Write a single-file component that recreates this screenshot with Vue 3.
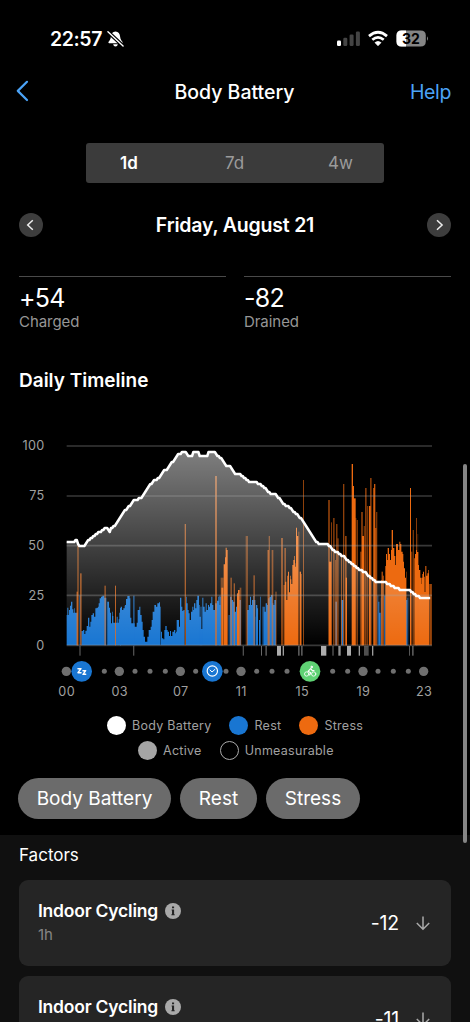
<script setup>
// Chart space: three units per CSS pixel, baseline at 646, 100% at 48.
const BASE = 646

// Step profiles: an x offset, then x/top pairs; the last x closes the run.
const restRuns = [
  [30, [170,555,172,533,175,555,177,540,180,527,183,515,187,538,190,548,193,535,195,548,203,646,214,603,219,600,223,612,226,602,230,588,234,563,238,590,241,575,244,555,248,550,252,560,256,535,260,533,264,530,266,520,269,505,273,500,277,497,283,503,289,646,292,515,297,533,300,548,303,580,306,545,308,558,310,578,315,578,320,560,323,578,326,568,328,548,332,530,336,540,340,535,344,527,348,507,352,500,356,498,358]],
  [360, [28,505,31,563,34,580,44,590,50,578,53,540,58,530,61,555,65,575,68,600,71,620,75,635,82,620,86,600,92,590,95,570,98,545,103,525,108,530,112,520,117,517,120,646,123,605,126,625,130,628,133,600,136,588,140,600,143,605,147,618,150,603,153,618,157,605,162,600,166,610,168,605,170,570,177,590,180,503,184,530,187,543,190,540,194,646,198,500,200,520,203,540,206,550,209,570,213,545,217,530,220,540,222,520,226,535,229,510,232,497,237,525,239,560,243,597,247,503,250,530,254,545,257,520,260,540,264,525,267,530,270,520,274,500,277,525,280,540,285,520,291,512,295,543,297]],
  [600, [51,515,55,500,58,525,61,500,64]],
  [600, [90,500,95,510,99,515,104,545,108,530,112,497,115,510,120,510,123]],
  [600, [141,540,146,525,150,500,153,525,156,510,160,498,163,510,166,646,168,525,172,535,174]],
  [600, [190,530,194,545,197,520,201,525,204,505,208,500,213,495,218,520,220,525,223,510,228]],
  [930, [205,515,208,548,212]],
]
const restThin = [
  [30,207,6,497,.45],[30,291,4,515,.35],[360,0,3,535,1],[360,39,5,497,.6],[360,120,3,530,.6],
  [360,239,8,530,.4],[360,297,5,497,.5],[600,85,5,555,.5],[600,166,3,560,.5],[600,177,3,570,1],
  [600,180,3,500,.6],[600,186,4,530,.4],[600,259,4,510,.7],[930,76,5,515,1],[930,94,6,510,1],
  [930,202,3,497,.6],[930,212,3,503,.5],[930,222,6,497,.7],[930,288,4,510,1],[930,292,3,503,.6],
]
const stressRuns = [
  [360, [311,403,315,382,317,353,320,360,323]],
  [600, [255,455,259,510,262,437,264,425,267,487,270,437,272,448,274,462,277,405,280,390,283,378,285,410,287,400,288,293,291,318,295]],
  [930, [227,408,228,372,231,390,233,354,237,372,240,390,243,360,245,300,249,354,253,378,256,405,258,342,261,342,264,360,268,335,271,342,274,365,278,372,280,395,282,415,285,443,288]],
  [930, [313,385,315,372,318,360,321,366,325,405,327,420,331,443,333,462,334,443,337,432,339,425,342,440,344,486,346,408,349,437,352,430,355,420,357]],
]
const stressThin = [
  [30,200,3,485,1],[30,202,4,345,.6],[30,210,5,430,.6],[30,283,5,467,.5],[30,315,3,467,.75],
  [360,194,4,282,.65],[360,285,6,138,.6],[360,302,9,443,.45],[360,304,6,473,1],[360,331,5,443,.5],
  [360,341,4,460,.6],[360,351,3,490,1],[600,114,5,480,1],[600,119,5,473,.5],[600,137,7,318,.45],
  [600,160,5,436,.5],[600,203,3,360,1],[600,206,4,318,.5],[600,215,5,360,.55],[600,226,4,485,.5],
  [600,243,6,324,.55],[600,251,3,465,.9],[600,253,5,354,.55],[600,295,3,305,.5],[600,299,4,425,1],
  [600,303,3,432,.5],[600,309,3,150,.6],
  [930,54,6,210,.5],[930,57,7,395,1],[930,63,3,277,.55],[930,69,5,264,.5],[930,75,3,390,.5],
  [930,79,3,282,.8],[930,82,4,325,.55],[930,93,3,375,.6],[930,99,4,162,.6],[930,105,5,318,.6],
  [930,107,4,443,1],[930,125,4,102,1],[930,129,3,168,1],[930,131,6,205,1],[930,136,3,264,.6],
  [930,140,4,270,.5],[930,151,4,365,.7],[930,153,6,246,.5],[930,156,6,318,1],[930,161,4,288,.45],
  [930,165,5,174,.55],[930,171,4,228,.5],[930,177,5,228,1],[930,180,5,144,.55],[930,190,3,174,1],
  [930,192,4,162,.85],[930,196,3,294,1],[930,198,4,246,.5],[930,213,3,450,.6],[930,215,3,425,1],
  [930,218,4,437,.6],[930,225,3,408,.5],[930,288,3,425,.4],[930,300,3,174,1],[930,303,4,365,.5],
  [930,308,4,300,.5],[930,318,3,264,.55],[930,321,4,312,.2],[930,357,4,462,.5],[930,361,4,462,.85],
]
const active = [
  [30,208,4,.45],[360,39,4,.45],[600,128,4,.45],[600,183,3,.6],[600,196,5,.45],[600,231,12,1],
  [600,248,4,.9],[600,294,5,.5],[600,303,5,.5],[600,363,16,1],[930,67,4,.5],[930,85,7,.85],
  [930,111,12,1],[930,146,4,.9],[930,162,14,.45],[930,186,4,.9],[930,297,3,.5],[930,306,5,.5],
]

const runPath = ([o, p]) => {
  let d = `M${o + p[0]} ${BASE}`
  for (let i = 0; i < p.length - 1; i += 2) d += `V${p[i + 1]}H${o + p[i + 2]}`
  return d + `V${BASE}Z`
}
const restPath = restRuns.map(runPath).join('') + 'M360 646V535H363V543H372V535H375V525H378V508H382V498H389V646Z'
const stressPath = stressRuns.map(runPath).join('')

const battery = [
  [200,336],[220,336],[224,330],[233,330],[235,342],[242,348],[252,348],[256,340],[270,325],[285,312],
  [300,304],[315,294],[324,292],[327,308],[332,294],[348,281],[356,265],[375,240],[402,210],[422,203],
  [445,170],[460,150],[475,144],[490,122],[500,118],[515,97],[532,74],[544,66],[560,66],[563,78],
  [577,78],[580,66],[595,66],[598,78],[622,78],[625,66],[647,66],[651,76],[660,80],[680,106],
  [690,108],[705,127],[720,131],[750,154],[770,156],[790,168],[810,188],[830,193],[850,220],[870,232],
  [905,265],[930,302],[950,335],[960,342],[984,342],[1000,358],[1030,377],[1070,412],[1095,425],
  [1130,455],[1158,455],[1175,466],[1205,479],[1230,480],[1250,495],[1270,503],[1292,503],
]
const levelAt = (x) => {
  const i = Math.max(1, battery.findIndex((p) => p[0] >= x))
  const [x0, y0] = battery[i - 1]
  const [x1, y1] = battery[i]
  const y = y0 + ((y1 - y0) * (x - x0)) / (x1 - x0)
  return BASE - Math.round((BASE - y) / 6) * 6 + 2
}
const samples = []
for (let x = 200; x <= 1292; x += 3.8) samples.push(`${x.toFixed(1)} ${levelAt(x)}`)
const linePath = 'M' + samples.join('L')
const areaPath = `${linePath}V${BASE}H200Z`

const grid = [[100, 48], [75, 198], [50, 347], [25, 496], [0, 646]]
const bigDots = [199, 358, 541, 723, 1089, 1271]
const hours = [[199, '00'], [358, '03'], [541, '07'], [723, '11'], [906, '15'], [1089, '19'], [1271, '23']]
const smallDots = [313, 405, 450, 496, 587, 678, 770, 816, 861, 998, 1043, 1134, 1180, 1225]
const factors = [{ name: 'Indoor Cycling', time: '1h', value: '-12' }, { name: 'Indoor Cycling', time: '1h', value: '-11' }]
</script>

<template>
  <main class="screen">
    <div class="status">
      <span class="time">22:57</span>
      <svg class="bell" width="17" height="18" viewBox="0 0 18 18">
        <path d="M9 1C6 1.200 4.200 3.300 4.100 6.500C4 9.500 2.200 10.800 1.500 12.200Q1.200 13.300 2.200 13.400H15.800Q16.800 13.300 16.500 12.200C15.800 10.800 14 9.500 13.900 6.500C13.800 3.300 12 1.200 9 1ZM6.500 14.500H11.500Q11 17 9 17T6.500 14.500Z" fill="#fff" />
        <path d="M1 1.400L17 16.400" stroke="#000" stroke-width="4" />
        <path d="M1 1.400L17 16.400" stroke="#fff" stroke-width="1.500" stroke-linecap="round" />
      </svg>
      <svg class="sys" width="94" height="20" viewBox="0 0 94 20">
        <rect x="0" y="11.500" width="4" height="5.500" rx="1.300" fill="#fff" />
        <rect x="6.300" y="8.700" width="4" height="8.300" rx="1.300" fill="#444" />
        <rect x="12.600" y="5.500" width="4" height="11.500" rx="1.300" fill="#444" />
        <rect x="18.900" y="2.500" width="4" height="14.500" rx="1.300" fill="#444" />
        <g fill="none" stroke="#fff" stroke-width="2.700">
          <path d="M32 7.100Q41 -.6 50 7.100" />
          <path d="M35.300 10.700Q41 6 46.700 10.700" />
        </g>
        <path d="M38 13.600Q41 11.300 44 13.600L41 16.700Z" fill="#fff" stroke="#fff" stroke-width=".8" stroke-linejoin="round" />
        <path d="M64.500 1.500H83.500Q88.800 1.500 88.800 6.500V12.500Q88.800 17.500 83.500 17.500H64.500Q59.500 17.500 59.500 12.500V6.500Q59.500 1.500 64.500 1.500Z" fill="#858585" />
        <path d="M69 1.500H64.500Q59.500 1.500 59.500 6.500V12.500Q59.500 17.500 64.500 17.500H69Z" fill="#fff" />
        <path d="M90 7.200Q92 9.500 90 11.800Z" fill="#858585" />
        <text x="74" y="14.500" text-anchor="middle" class="charge">32</text>
      </svg>
    </div>

    <header class="nav">
      <svg width="14" height="22" viewBox="0 0 14 22"><path d="M11 1.800L1.800 10.900L11 20" fill="none" stroke="#4ba3f7" stroke-width="2.200" stroke-linecap="round" stroke-linejoin="round" /></svg>
      <h1>Body Battery</h1>
      <a>Help</a>
    </header>

    <div class="tabs"><b>1d</b><span>7d</span><span>4w</span></div>

    <div class="date">
      <i class="round"><svg width="24" height="24" viewBox="0 0 24 24"><path d="M13.800 7.200L8.700 12L13.800 16.800" /></svg></i>
      <h2>Friday, August 21</h2>
      <i class="round"><svg width="24" height="24" viewBox="0 0 24 24"><path d="M10 7.200L15.100 12L10 16.800" /></svg></i>
    </div>

    <section class="stats">
      <div><strong>+54</strong><small>Charged</small></div>
      <div><strong>-82</strong><small>Drained</small></div>
    </section>

    <h3 class="heading">Daily Timeline</h3>

    <svg class="chart" width="470" height="280" viewBox="0 0 1410 840">
      <defs>
        <linearGradient id="fade" gradientUnits="userSpaceOnUse" x1="0" y1="60" x2="0" y2="646">
          <stop offset="0" stop-color="#fff" stop-opacity=".5" />
          <stop offset="1" stop-color="#fff" stop-opacity="0" />
        </linearGradient>
      </defs>
      <path :d="restPath" fill="#1976d2" />
      <rect v-for="(b, i) in restThin" :key="'r' + i" :x="b[0] + b[1]" :y="b[3]" :width="b[2]" :height="646 - b[3]" :opacity="b[4]" fill="#1976d2" />
      <path :d="stressPath" fill="#ed6a10" />
      <rect v-for="(b, i) in stressThin" :key="'s' + i" :x="b[0] + b[1]" :y="b[3]" :width="b[2]" :height="646 - b[3]" :opacity="b[4]" fill="#ed6a10" />
      <path :d="areaPath" fill="url(#fade)" />
      <g v-for="g in grid" :key="g[0]">
        <path :d="`M200 ${g[1]}H1296`" stroke="#aaa" stroke-opacity=".33" stroke-width="5" />
        <text x="134" :y="g[1] + 13" text-anchor="end" class="axis">{{ g[0] }}</text>
      </g>
      <path :d="linePath" fill="none" stroke="#fff" stroke-width="7.500" stroke-linejoin="round" />
      <rect v-for="(b, i) in active" :key="'a' + i" :x="b[0] + b[1]" y="648" :width="b[2]" height="29" :opacity="b[3]" fill="#adadad" />
      <circle v-for="x in smallDots" :key="x" :cx="x" cy="724" r="7.500" fill="#6f6f6f" />
      <circle v-for="x in bigDots" :key="x" :cx="x" cy="724" r="14" fill="#6f6f6f" />
      <text v-for="h in hours" :key="h[1]" :x="h[0] + 1" y="797" text-anchor="middle" class="axis">{{ h[1] }}</text>
      <g fill="none" stroke="#fff" stroke-linecap="round" stroke-linejoin="round">
        <circle cx="245" cy="724" r="31" fill="#1976d2" stroke="none" />
        <path d="M234 716H243L234 728H243M249 722H257L249 733H257" stroke-width="4.500" />
        <circle cx="637" cy="724" r="31" fill="#1976d2" stroke="none" />
        <circle cx="637" cy="723" r="15.500" stroke-width="3.500" />
        <path d="M630 720L636 726L645 718" stroke-width="3" />
        <circle cx="930" cy="724" r="31" fill="#5fd274" stroke="none" />
        <g stroke-width="2.500">
          <circle cx="920" cy="732" r="6.500" /><circle cx="941" cy="732" r="6.500" />
          <path d="M929 735L932 728L924 724L932 716L937 722H942" stroke-width="3.500" />
          <circle cx="935" cy="711" r="2.500" fill="#fff" />
        </g>
      </g>
    </svg>

    <div class="legend">
      <div class="row one">
        <span><i class="white"></i>Body Battery</span><span><i class="blue"></i>Rest</span><span><i class="orange"></i>Stress</span>
      </div>
      <div class="row two"><span><i class="gray"></i>Active</span><span><i class="hollow"></i>Unmeasurable</span></div>
    </div>

    <div class="chips"><button class="c1">Body Battery</button><button class="c2">Rest</button><button class="c3">Stress</button></div>

    <section class="factors">
      <h4>Factors</h4>
      <article v-for="f in factors" :key="f.value" class="card">
        <div class="info">
          <div class="name"><span>{{ f.name }}</span>
            <svg width="16" height="16" viewBox="0 0 16 16"><circle cx="8" cy="8" r="8" fill="#a9a9a9" /><path d="M7 3.400H9.100V5.200H7ZM6.600 6.500H9.100V11.200H9.700V12.200H6.400V11.200H7V7.500H6.600Z" fill="#252525" /></svg>
          </div>
          <small>{{ f.time }}</small>
        </div>
        <span class="value">{{ f.value }}</span>
        <svg width="16" height="16" viewBox="0 0 16 16"><path d="M8 1.500V14M1.800 8L8 14.200L14.200 8" fill="none" stroke="#aaa" stroke-width="1.500" /></svg>
      </article>
    </section>
    <div class="scrollbar"></div>
  </main>
</template>

<style>
html, body { background: #000; overflow: hidden; }
</style>

<style scoped>
* { box-sizing: border-box; }
.screen { position: relative; width: 470px; height: 1022px; overflow: hidden; background: #000; color: #fff; font-family: Inter, "Liberation Sans", sans-serif; display: flex; flex-direction: column; }
h1, h2, h3, h4 { margin: 0; white-space: nowrap; }
.status { height: 62px; padding: 15px 0 0 50px; display: flex; align-items: center; flex: none; }
.time { font-size: 19.500px; font-weight: 600; letter-spacing: -.4px; width: 56px; white-space: nowrap; }
.bell { margin-left: 1px; }
.sys { margin-left: 213px; }
.charge { font-size: 14px; font-weight: 700; fill: #000; }
.nav { height: 60px; display: grid; grid-template-columns: 100px 1fr 100px; align-items: center; padding: 0 19px 0 16px; flex: none; }
.nav svg { margin-top: -3px; }
.nav h1 { font-size: 19.500px; font-weight: 500; text-align: center; letter-spacing: 0; margin-left: 2px; }
.nav a { color: #4ba3f7; font-size: 19.500px; text-align: right; letter-spacing: -.35px; }
.tabs { width: 298px; height: 40px; margin: 21px 0 0 86px; border-radius: 3px; background: #3b3b3b; display: grid; grid-template-columns: 86px 125px 87px; align-items: center; text-align: center; font-size: 17px; color: #9b9b9b; flex: none; }
.tabs b { color: #fff; font-weight: 600; }
.date { display: flex; align-items: center; justify-content: space-between; height: 24px; margin: 30px 19px 0; flex: none; }
.date h2 { font-size: 19.500px; font-weight: 600; letter-spacing: -.2px; line-height: 26px; }
.round { width: 24px; height: 24px; border-radius: 50%; background: #3d3d3d; }
.round svg { display: block; fill: none; stroke: #eee; stroke-width: 1.500; }
.stats { display: grid; grid-template-columns: 207px 207px; gap: 18px; margin: 39px 19px 0; height: 60px; flex: none; }
.stats div { border-top: 1px solid #4a4a4a; padding-top: 7px; display: flex; flex-direction: column; }
.stats strong { font-size: 25px; line-height: 29px; font-weight: 400; letter-spacing: -.7px; }
.stats small { font-size: 15px; line-height: 18px; color: #969696; letter-spacing: -.05px; }
.heading { margin: 33px 0 0 19px; height: 24px; line-height: 24px; font-size: 19px; font-weight: 600; }
.chart { display: block; margin-top: 37px; flex: none; }
.axis { font-size: 38px; fill: #a0a0a0; letter-spacing: 1px; }
.legend { padding-top: 3px; height: 56px; flex: none; }
.row { display: flex; height: 25px; align-items: center; color: #a0a0a0; font-size: 12.500px; letter-spacing: .28px; }
.row span { display: flex; align-items: center; white-space: nowrap; }
.row i { width: 19px; height: 19px; border-radius: 50%; margin-right: 6px; }
.one { margin-left: 107px; gap: 18px; }
.two { margin-left: 138px; gap: 18px; }
.white { background: #fff; } .blue { background: #1976d2; } .orange { background: #ed6a10; } .gray { background: #a5a5a5; } .hollow { border: 1px solid #ababab; }
.chips { display: flex; gap: 9px; margin: 12px 0 0 18px; height: 57px; flex: none; }
.chips button { height: 41px; padding: 0; border: 0; border-radius: 21px; color: #fff; background: #6b6b6b; font: 400 19px Inter, sans-serif; white-space: nowrap; }
.c1 { width: 153px; } .c2 { width: 77px; } .c3 { width: 94px; }
.factors { background: #101010; height: 187px; padding: 0 19px; flex: none; }
.factors h4 { height: 45px; line-height: 40px; font-size: 17px; font-weight: 400; }
.card { height: 86px; margin-bottom: 10px; border-radius: 9px; background: #252525; padding: 0 20px 0 19px; display: flex; align-items: center; }
.info { flex: 1; }
.name { display: flex; align-items: center; gap: 7px; font-size: 17.500px; line-height: 22px; font-weight: 600; letter-spacing: -.22px; margin-top: -2px; }
.info small { display: block; font-size: 15px; line-height: 18px; margin-top: 4px; color: #858585; }
.value { font-size: 19.500px; letter-spacing: -.2px; margin-right: 16px; }
.scrollbar { position: absolute; right: 3px; top: 464px; width: 4px; height: 379px; border-radius: 2px; background: #858585; }
</style>
